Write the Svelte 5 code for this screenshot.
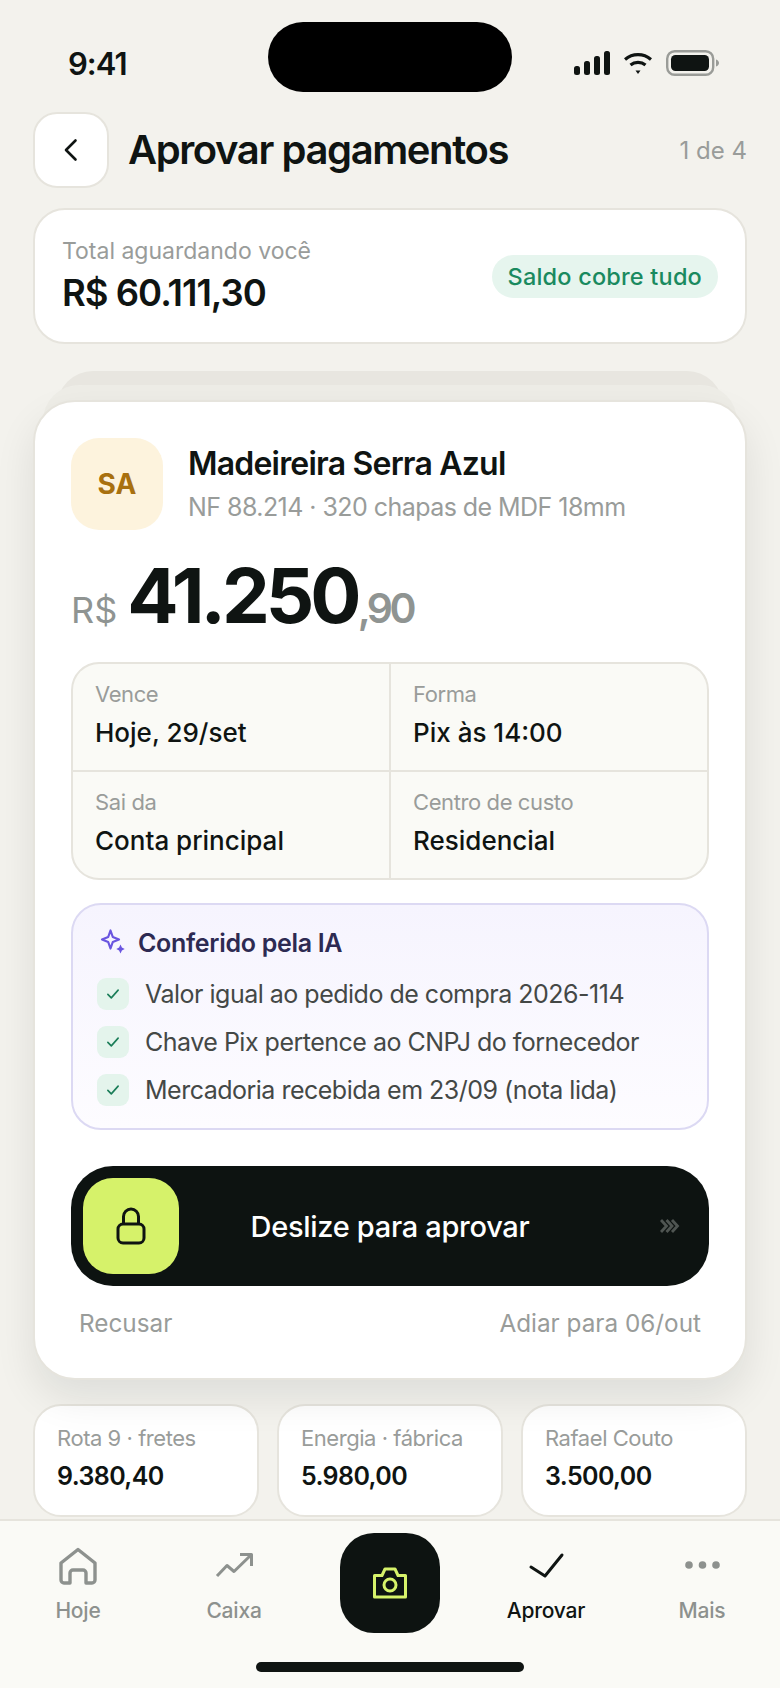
<script lang="ts">
  const details = [
    { label: 'Vence', value: 'Hoje, 29/set' },
    { label: 'Forma', value: 'Pix às 14:00' },
    { label: 'Sai da', value: 'Conta principal' },
    { label: 'Centro de custo', value: 'Residencial' }
  ];
  const checks = [
    'Valor igual ao pedido de compra 2026-114',
    'Chave Pix pertence ao CNPJ do fornecedor',
    'Mercadoria recebida em 23/09 (nota lida)'
  ];
  const queue = [
    { name: 'Rota 9 · fretes', value: '9.380,40' },
    { name: 'Energia · fábrica', value: '5.980,00' },
    { name: 'Rafael Couto', value: '3.500,00' }
  ];
</script>

<div class="page">
  <div class="island"></div>

  <div class="status">
    <span class="time">9:41</span>
    <div class="status-icons">
      <svg width="36" height="26" viewBox="0 0 36 26" fill="#0f1412">
        <rect x="0" y="16" width="6" height="9" rx="2.500" />
        <rect x="10" y="11" width="6" height="14" rx="2.500" />
        <rect x="20" y="6" width="6" height="19" rx="2.500" />
        <rect x="30" y="1" width="6" height="24" rx="2.500" />
      </svg>
      <svg width="28" height="24" viewBox="0 0 28 24" fill="none" stroke="#0f1412" stroke-width="3.200">
        <path d="M1 8.500C8.500 2 19.500 2 27 8.500" />
        <path d="M6.500 14C10.800 10.500 17.200 10.500 21.500 14" />
        <path d="M11.500 19.500h5L14 23z" fill="#0f1412" stroke="none" />
      </svg>
      <svg width="53" height="26" viewBox="0 0 53 26">
        <rect x="1.200" y="1.200" width="46" height="23.600" rx="7.500" fill="none" stroke="#9a9c98" stroke-width="2.400" />
        <rect x="5" y="5" width="38" height="16" rx="4.500" fill="#0f1412" />
        <path d="M50 9.500c2 .6 3 2 3 3.500s-1 2.900-3 3.500z" fill="#9a9c98" />
      </svg>
    </div>
  </div>

  <header class="header">
    <button class="back" aria-label="Voltar">
      <svg width="16" height="24" viewBox="0 0 16 24" fill="none" stroke="#0f1412" stroke-width="2.600" stroke-linecap="round" stroke-linejoin="round">
        <path d="M12.500 2.500 3 12l9.500 9.500" />
      </svg>
    </button>
    <h1>Aprovar pagamentos</h1>
    <span class="counter">1 de 4</span>
  </header>

  <section class="summary">
    <div>
      <div class="summary-label">Total aguardando você</div>
      <div class="summary-value">R$ 60.111,30</div>
    </div>
    <span class="pill">Saldo cobre tudo</span>
  </section>

  <div class="stack">
    <div class="ghost ghost-back"></div>
    <div class="ghost ghost-front"></div>

    <article class="card">
      <div class="vendor">
        <div class="avatar">SA</div>
        <div>
          <div class="vendor-name">Madeireira Serra Azul</div>
          <div class="vendor-sub">NF 88.214 · 320 chapas de MDF 18mm</div>
        </div>
      </div>

      <div class="amount">
        <span class="currency">R$</span>
        <span class="whole">41.250</span><span class="cents">,90</span>
      </div>

      <div class="details">
        {#each details as item}
          <div class="detail">
            <div class="detail-label">{item.label}</div>
            <div class="detail-value">{item.value}</div>
          </div>
        {/each}
      </div>

      <div class="ai">
        <div class="ai-title">
          <svg width="26" height="26" viewBox="0 0 26 26" fill="none">
            <path d="M10.500 2.500 12.800 9 19 11.500 12.800 14 10.500 20.500 8.200 14 2 11.500 8.200 9z" stroke="#6a55e0" stroke-width="2.200" stroke-linejoin="round" />
            <path d="M20.500 16.500l1.400 3 2.800 1.500-2.800 1.500-1.400 3-1.400-3-2.800-1.500 2.800-1.500z" fill="#6a55e0" />
          </svg>
          <span>Conferido pela IA</span>
        </div>
        {#each checks as text}
          <div class="check">
            <span class="tick">
              <svg width="14" height="12" viewBox="0 0 16 14" fill="none" stroke="#1a7d58" stroke-width="1.900" stroke-linecap="round" stroke-linejoin="round">
                <path d="M2 7.500 6 11.500 14 2.500" />
              </svg>
            </span>
            <span>{text}</span>
          </div>
        {/each}
      </div>

      <div class="slider">
        <div class="thumb">
          <svg width="32" height="38" viewBox="0 0 32 38" fill="none" stroke="#0f1412" stroke-width="3" stroke-linejoin="round">
            <rect x="3" y="17" width="26" height="19" rx="5" />
            <path d="M8.500 17V9.500a7.500 7.500 0 0 1 15 0V17" />
          </svg>
        </div>
        <span class="slider-text">Deslize para aprovar</span>
        <svg class="chevrons" width="20" height="14" viewBox="0 0 20 14" fill="none" stroke="#4f5552" stroke-width="2.800">
          <path d="M1 1l5.500 6L1 13M6.500 1 12 7l-5.500 6M12 1l5.500 6-5.500 6" />
        </svg>
      </div>

      <div class="actions">
        <span>Recusar</span>
        <span>Adiar para 06/out</span>
      </div>
    </article>
  </div>

  <div class="queue">
    {#each queue as item}
      <div class="queue-card">
        <div class="queue-name">{item.name}</div>
        <div class="queue-value">{item.value}</div>
      </div>
    {/each}
  </div>

  <nav class="tabs">
    <div class="tab">
      <svg width="40" height="38" viewBox="0 0 40 38" fill="none" stroke="#8d918e" stroke-width="3.400" stroke-linejoin="round">
        <path d="M3 16 20 2.500 37 16v17a3 3 0 0 1-3 3h-6V26a3 3 0 0 0-3-3h-10a3 3 0 0 0-3 3v10H6a3 3 0 0 1-3-3z" />
      </svg>
      <span>Hoje</span>
    </div>
    <div class="tab">
      <svg width="40" height="38" viewBox="0 0 40 38" fill="none" stroke="#8d918e" stroke-width="3" stroke-linejoin="round">
        <path d="M3 29 13 18.500 20 24.500 37 8" />
        <path d="M26 7.500h11.500V19" />
      </svg>
      <span>Caixa</span>
    </div>
    <div class="tab">
      <button class="camera" aria-label="Câmera">
        <svg width="34" height="32" viewBox="0 0 34 32" fill="none" stroke="#d6f26a" stroke-width="3" stroke-linejoin="round">
          <path d="M1.500 8.500H9L12 2h10l3 6.500h7.500V30h-31z" />
          <circle cx="17" cy="18" r="6" />
        </svg>
      </button>
    </div>
    <div class="tab active">
      <svg width="40" height="38" viewBox="0 0 40 38" fill="none" stroke="#0f1412" stroke-width="3" stroke-linecap="round" stroke-linejoin="round">
        <path d="M5 20 19 29 36 8" />
      </svg>
      <span>Aprovar</span>
    </div>
    <div class="tab">
      <svg width="40" height="38" viewBox="0 0 40 38" fill="#8d918e">
        <circle cx="7" cy="18" r="3.800" />
        <circle cx="20.500" cy="18" r="3.800" />
        <circle cx="34" cy="18" r="3.800" />
      </svg>
      <span>Mais</span>
    </div>
  </nav>

  <div class="home-bar"></div>
</div>

<style>
  :global(body) {
    margin: 0;
    background: #f3f2ed;
  }

  .page {
    position: relative;
    display: flex;
    flex-direction: column;
    width: 780px;
    height: 1688px;
    overflow: hidden;
    background: #f3f2ed;
    color: #0f1412;
    font-family: 'Inter', 'Liberation Sans', sans-serif;
  }

  .island {
    position: absolute;
    top: 22px;
    left: 268px;
    width: 244px;
    height: 70px;
    border-radius: 35px;
    background: #000;
  }

  .status {
    display: flex;
    justify-content: space-between;
    align-items: center;
    height: 48px;
    margin-top: 39px;
    padding: 0 61px 0 68px;
  }

  .time {
    font-size: 31px;
    font-weight: 600;
    letter-spacing: -1px;
  }

  .status-icons {
    display: flex;
    align-items: center;
    gap: 14px;
  }

  .header {
    display: flex;
    align-items: center;
    margin-top: 25px;
    padding: 0 33px;
  }

  .back {
    display: flex;
    align-items: center;
    justify-content: center;
    width: 76px;
    height: 76px;
    padding: 0;
    border: 2px solid #e6e4dd;
    border-radius: 24px;
    background: #fff;
  }

  h1 {
    flex: 1;
    margin: -2px 0 0 19px;
    font-size: 40px;
    font-weight: 600;
    letter-spacing: -1.400px;
  }

  .counter {
    font-size: 24px;
    color: #999c9a;
  }

  .summary {
    display: flex;
    justify-content: space-between;
    align-items: center;
    height: 136px;
    box-sizing: border-box;
    margin: 20px 33px 0;
    padding: 0 27px;
    border: 2px solid #e6e4dd;
    border-radius: 32px;
    background: #fff;
  }

  .summary-label {
    font-size: 23px;
    color: #999c9a;
  }

  .summary-value {
    margin-top: 6px;
    font-size: 36.500px;
    font-weight: 600;
    letter-spacing: -1px;
  }

  .pill {
    padding: 7px 16px;
    border-radius: 22px;
    background: #e6f5ee;
    color: #1a8a5f;
    font-size: 23.500px;
    font-weight: 500;
    letter-spacing: 0.200px;
  }

  .stack {
    position: relative;
    margin: 56px 33px 0;
  }

  .ghost {
    position: absolute;
    border-radius: 36px;
  }

  .ghost-back {
    top: -29px;
    left: 24px;
    right: 24px;
    height: 80px;
    background: #e8e6e0;
  }

  .ghost-front {
    top: -15px;
    left: 10px;
    right: 10px;
    height: 80px;
    background: #eeede7;
  }

  .card {
    position: relative;
    box-sizing: border-box;
    height: 980px;
    padding: 36px 36px 0;
    border: 2px solid #e6e4dd;
    border-radius: 42px;
    background: #fff;
    box-shadow: 0 18px 40px rgba(15, 20, 18, 0.09);
  }

  .vendor {
    display: flex;
    gap: 25px;
  }

  .avatar {
    display: flex;
    align-items: center;
    justify-content: center;
    flex: none;
    width: 92px;
    height: 92px;
    border-radius: 28px;
    background: #fdf3dd;
    color: #a8700f;
    font-size: 28px;
    font-weight: 700;
  }

  .vendor-name {
    margin-top: 6px;
    font-size: 32px;
    font-weight: 600;
    letter-spacing: -0.800px;
  }

  .vendor-sub {
    margin-top: 9px;
    font-size: 25px;
    color: #999c9a;
    letter-spacing: -0.550px;
  }

  .amount {
    display: flex;
    align-items: baseline;
    margin-top: 21px;
    line-height: 88px;
  }

  .currency {
    margin-right: 10px;
    font-size: 36px;
    color: #8f9492;
  }

  .whole {
    font-size: 76px;
    font-weight: 700;
    letter-spacing: -4px;
  }

  .cents {
    font-size: 41px;
    font-weight: 600;
    color: #8f9492;
    letter-spacing: -3.500px;
  }

  .details {
    display: grid;
    grid-template-columns: 1fr 1fr;
    gap: 2px;
    margin-top: 8px;
    overflow: hidden;
    border: 2px solid #e6e4dd;
    border-radius: 28px;
    background: #e6e4dd;
  }

  .detail {
    height: 106px;
    box-sizing: border-box;
    padding: 17px 22px 0;
    background: #fafaf6;
  }

  .detail-label {
    font-size: 22px;
    color: #999c9a;
    letter-spacing: -0.400px;
  }

  .detail-value {
    margin-top: 10px;
    font-size: 26px;
    font-weight: 500;
  }

  .ai {
    box-sizing: border-box;
    height: 227px;
    margin-top: 23px;
    padding: 20px 24px 0;
    border: 2px solid #dcd9f3;
    border-radius: 30px;
    background: linear-gradient(180deg, #f6f4fe, #fdfcff);
  }

  .ai-title {
    display: flex;
    align-items: center;
    gap: 12px;
    height: 36px;
    margin-bottom: 9px;
    color: #2d2a52;
    font-size: 25px;
    font-weight: 600;
    letter-spacing: -0.300px;
  }

  .ai-title svg {
    margin: -4px 0 0 3px;
  }

  .check {
    display: flex;
    align-items: center;
    gap: 16px;
    height: 48px;
    color: #444846;
    font-size: 25px;
    letter-spacing: -0.500px;
  }

  .tick {
    display: flex;
    align-items: center;
    justify-content: center;
    flex: none;
    width: 32px;
    height: 32px;
    border-radius: 9px;
    background: #e4f4ec;
  }

  .slider {
    position: relative;
    display: flex;
    align-items: center;
    justify-content: center;
    height: 120px;
    margin-top: 36px;
    border-radius: 42px;
    background: #0d1311;
  }

  .thumb {
    position: absolute;
    top: 12px;
    left: 12px;
    display: flex;
    align-items: center;
    justify-content: center;
    width: 96px;
    height: 96px;
    border-radius: 30px;
    background: #d6f26a;
  }

  .slider-text {
    color: #fff;
    font-size: 29px;
    font-weight: 500;
    letter-spacing: -0.300px;
  }

  .chevrons {
    position: absolute;
    top: 53px;
    right: 29px;
  }

  .actions {
    display: flex;
    justify-content: space-between;
    margin-top: 22px;
    padding: 0 8px;
    color: #999c9a;
    font-size: 24.300px;
  }

  .queue {
    display: grid;
    grid-template-columns: repeat(3, 1fr);
    gap: 18px;
    margin: 24px 33px 0;
  }

  .queue-card {
    box-sizing: border-box;
    height: 113px;
    padding: 19px 22px 0;
    border: 2px solid #e6e4dd;
    border-radius: 28px;
    background: #fff;
  }

  .queue-name {
    font-size: 22px;
    color: #999c9a;
    letter-spacing: -0.450px;
  }

  .queue-value {
    margin-top: 10px;
    font-size: 25px;
    font-weight: 600;
    letter-spacing: -0.600px;
  }

  .tabs {
    display: grid;
    grid-template-columns: repeat(5, 1fr);
    flex: 1;
    margin-top: 2px;
    border-top: 2px solid #e6e4dd;
    background: #fafaf6;
  }

  .tab {
    display: flex;
    flex-direction: column;
    align-items: center;
    padding-top: 26px;
    color: #8d918e;
    font-size: 21px;
    font-weight: 500;
    letter-spacing: -0.200px;
  }

  .tab span {
    margin-top: 13px;
  }

  .tab.active {
    color: #0f1412;
  }

  .camera {
    display: flex;
    align-items: center;
    justify-content: center;
    width: 100px;
    height: 100px;
    margin-top: -14px;
    padding: 0;
    border: 0;
    border-radius: 34px;
    background: #0d1311;
  }

  .home-bar {
    position: absolute;
    bottom: 16px;
    left: 256px;
    width: 268px;
    height: 10px;
    border-radius: 5px;
    background: #0f1412;
  }
</style>
